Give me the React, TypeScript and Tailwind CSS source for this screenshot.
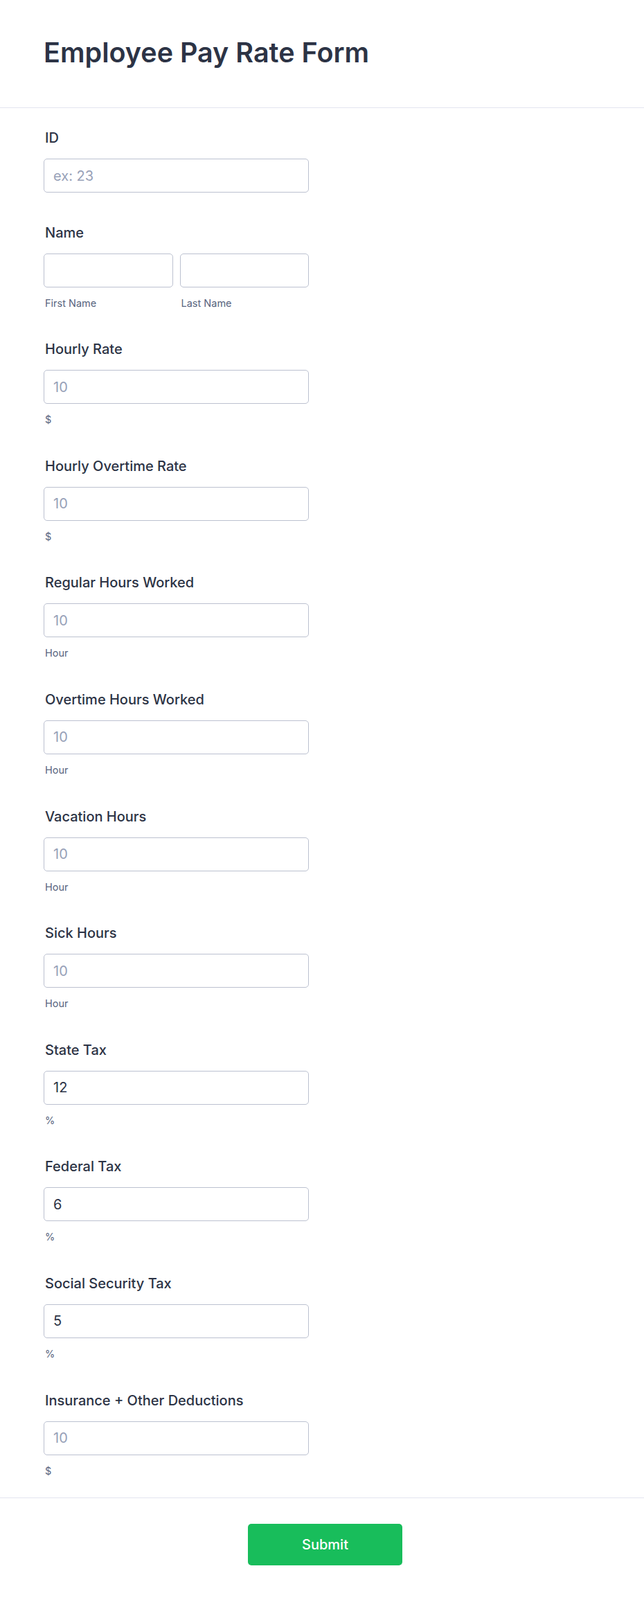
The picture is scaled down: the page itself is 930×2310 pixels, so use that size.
import React from "react";

type Field = {
  label: string;
  placeholder?: string;
  value?: string;
  sub?: string;
};

const fields: Field[] = [
  { label: "Hourly Rate", placeholder: "10", sub: "$" },
  { label: "Hourly Overtime Rate", placeholder: "10", sub: "$" },
  { label: "Regular Hours Worked", placeholder: "10", sub: "Hour" },
  { label: "Overtime Hours Worked", placeholder: "10", sub: "Hour" },
  { label: "Vacation Hours", placeholder: "10", sub: "Hour" },
  { label: "Sick Hours", placeholder: "10", sub: "Hour" },
  { label: "State Tax", value: "12", sub: "%" },
  { label: "Federal Tax", value: "6", sub: "%" },
  { label: "Social Security Tax", value: "5", sub: "%" },
  { label: "Insurance + Other Deductions", placeholder: "10", sub: "$" },
];

const inputCls =
  "h-[49px] w-full rounded-[5px] border border-[#bcc1d0] bg-white px-[13px] text-[20px] text-[#2c3345] placeholder:text-[#97a1b8] outline-none";

function Label({ children }: { children: React.ReactNode }) {
  return (
    <div className="mb-[18px] h-[24px] pl-[2px] text-[20px] font-medium leading-[24px] text-[#2c3345]">
      {children}
    </div>
  );
}

function Sub({ children }: { children: React.ReactNode }) {
  return (
    <div className="mt-[14px] h-[18px] pl-[2px] text-[14.5px] leading-[18px] text-[#57647e]">
      {children}
    </div>
  );
}

export default function App() {
  return (
    <div
      className="min-h-[2310px] w-full bg-white"
      style={{ fontFamily: "Inter, 'Noto Sans', sans-serif" }}
    >
      <header className="border-b border-[#e3e5ef] px-[63px] pb-[55px] pt-[52px]">
        <h1 className="text-[39.5px] font-semibold leading-[48px] text-[#2c3345]">
          Employee Pay Rate Form
        </h1>
      </header>

      <main className="flex flex-col gap-[45.6px] px-[63px] pb-[29px] pt-[31px]">
        <div className="w-[383px]">
          <Label>ID</Label>
          <input className={inputCls} placeholder="ex: 23" />
        </div>

        <div className="w-[383px]">
          <Label>Name</Label>
          <div className="grid grid-cols-2 gap-[10px]">
            <div>
              <input className={inputCls} />
              <Sub>First Name</Sub>
            </div>
            <div>
              <input className={inputCls} />
              <Sub>Last Name</Sub>
            </div>
          </div>
        </div>

        {fields.map((f) => (
          <div key={f.label} className="w-[383px]">
            <Label>{f.label}</Label>
            <input
              className={inputCls}
              placeholder={f.placeholder}
              defaultValue={f.value}
            />
            <Sub>{f.sub}</Sub>
          </div>
        ))}
      </main>

      <footer className="flex justify-center border-t border-[#e3e5ef] pb-[49px] pl-[9px] pt-[37px]">
        <button className="h-[60px] w-[223px] rounded-[5px] bg-[#18bd5b] text-[20px] font-medium text-white">
          Submit
        </button>
      </footer>
    </div>
  );
}
